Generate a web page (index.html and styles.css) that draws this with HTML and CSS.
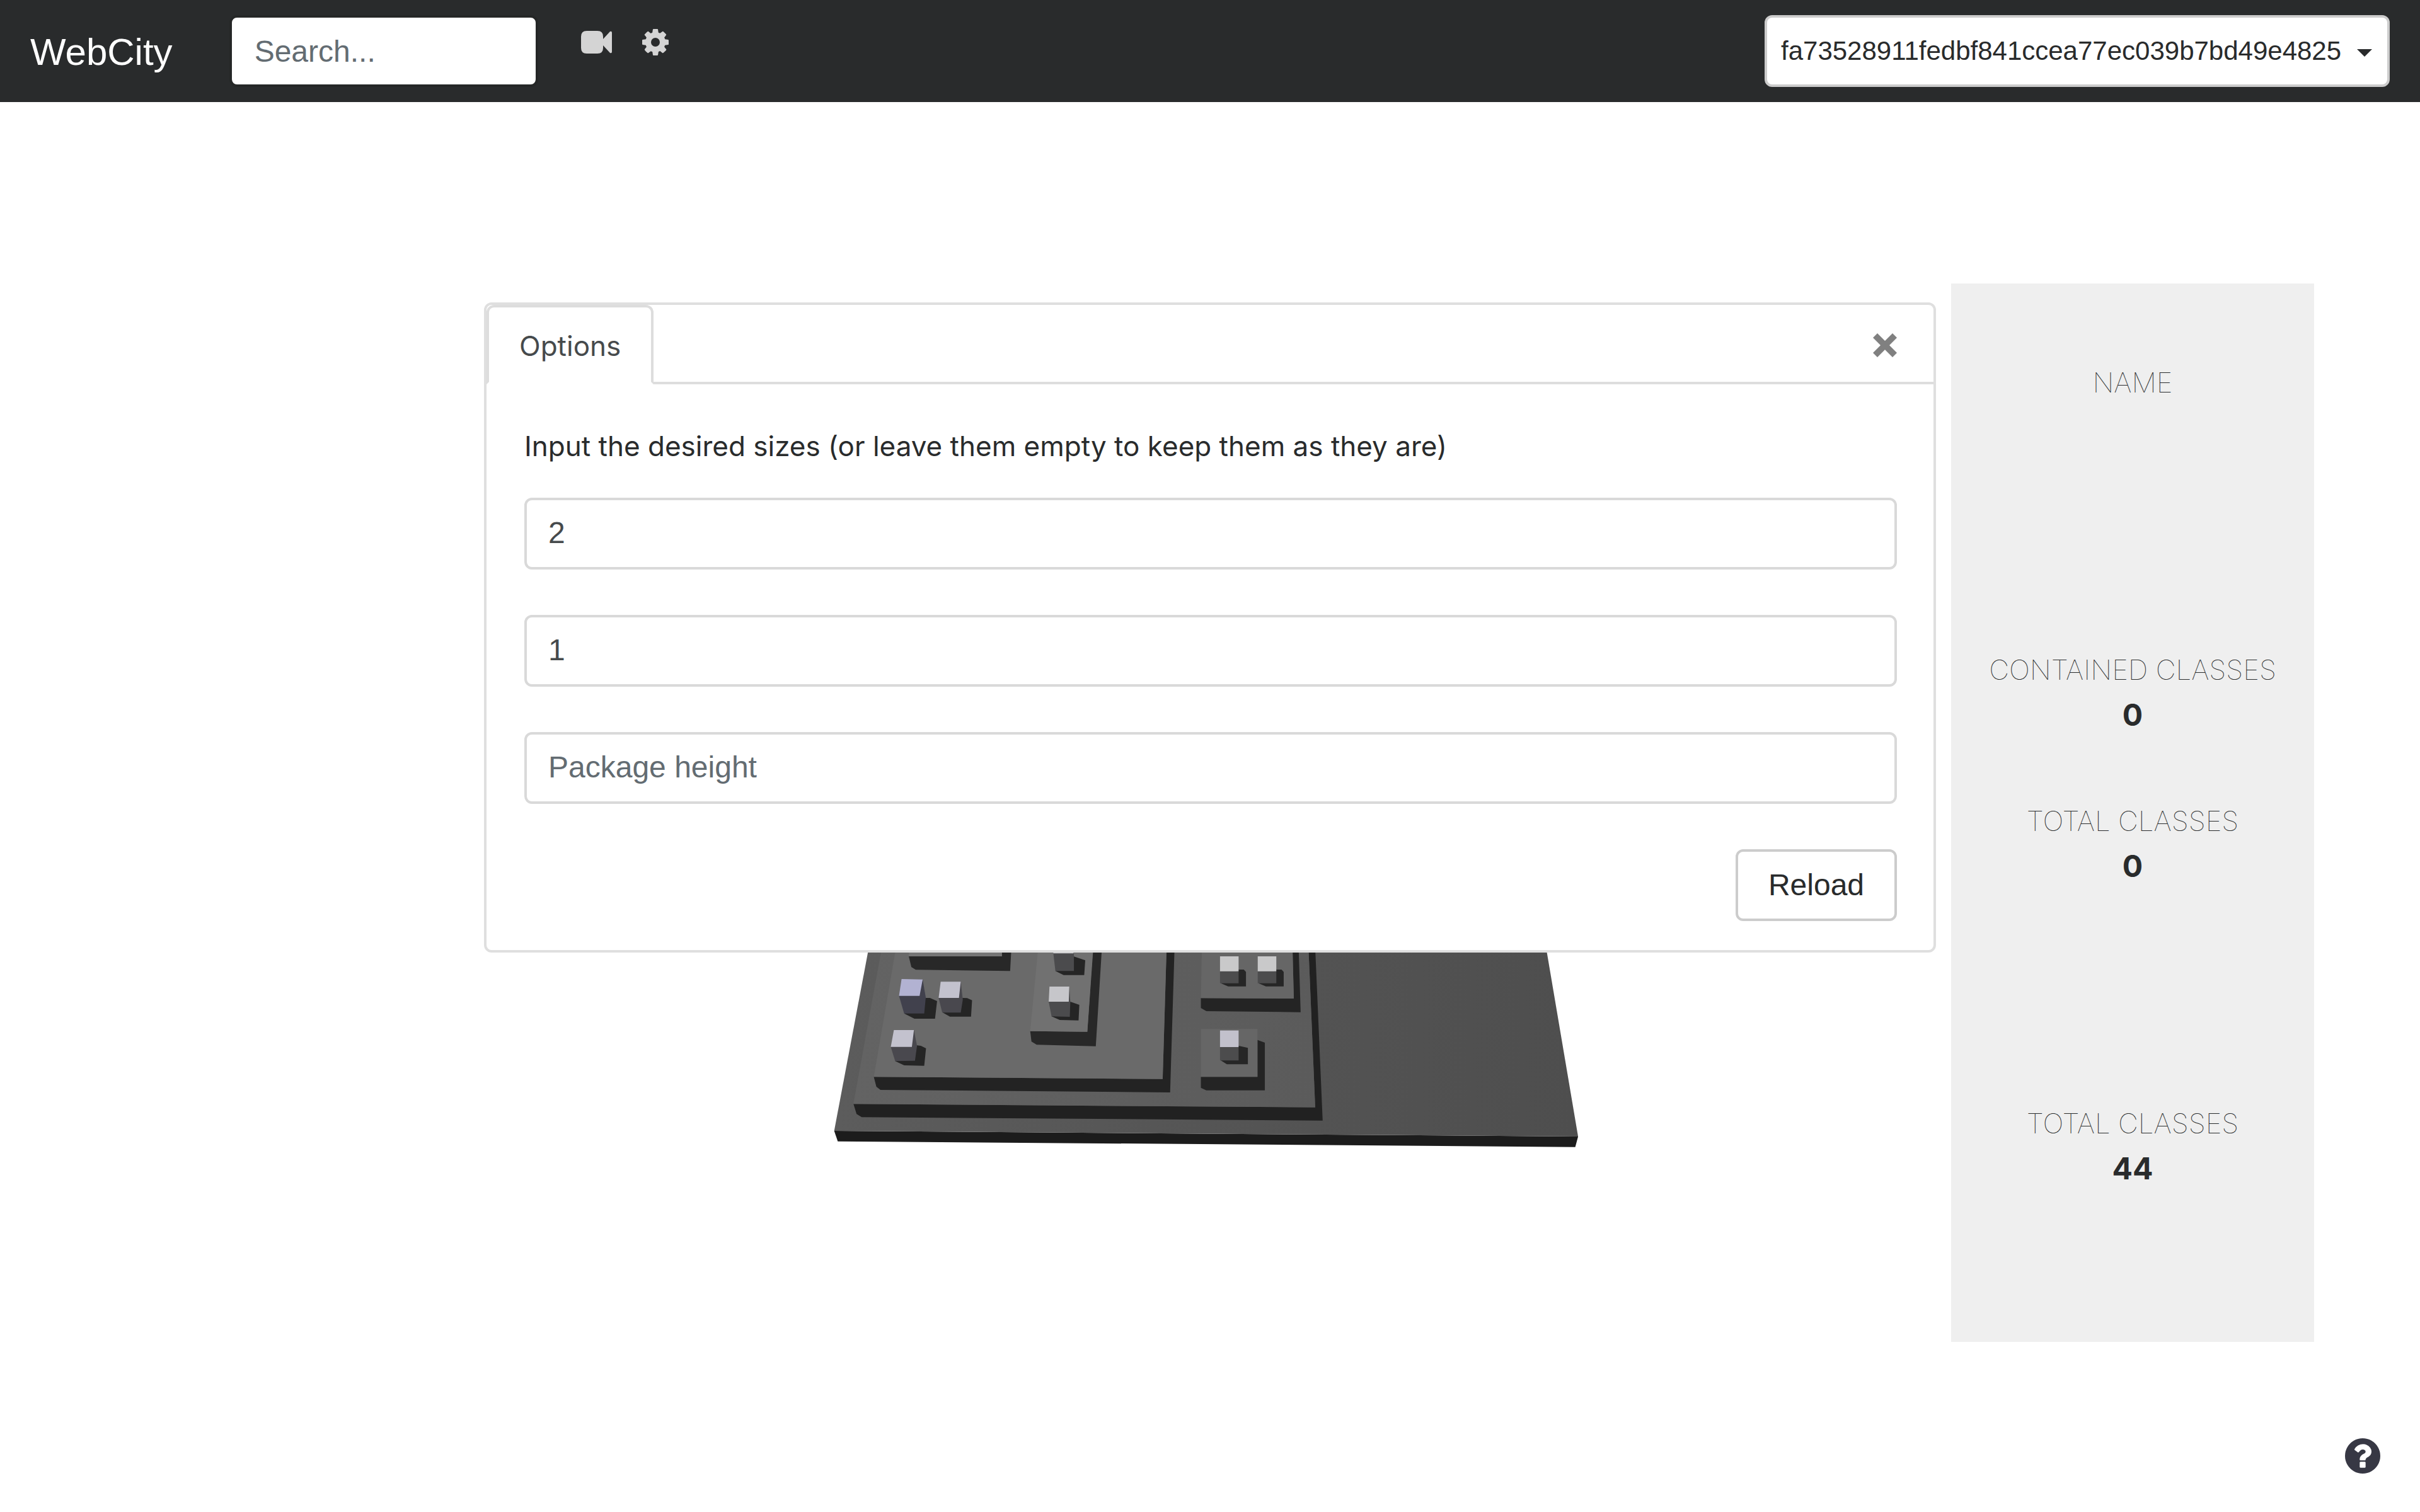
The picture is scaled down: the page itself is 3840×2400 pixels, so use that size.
FILE: index.html
```html
<!DOCTYPE html>
<html lang="en">
<head>
  <meta charset="utf-8">
  <meta name="viewport" content="width=device-width, initial-scale=1">
  <title>WebCity</title>
  <link rel="stylesheet" href="styles.css">
</head>
<body>
  <header class="navbar">
    <a class="brand" href="#">WebCity</a>
    <input class="control search" type="search" placeholder="Search..." aria-label="Search">
    <nav class="tools">
      <a class="tool" href="#" aria-label="Camera">
        <svg class="tool-icon camera" viewBox="0 0 49 36" aria-hidden="true">
          <path d="M9 0h17q9 0 9 9v4L46 1q3-1 3 2v30q0 3-3 2L35 23v4q0 9-9 9H9q-9 0-9-9V9q0-9 9-9z"/>
        </svg>
      </a>
      <a class="tool" href="#" aria-label="Settings">
        <svg class="tool-icon gear" viewBox="0 0 1536 1536" aria-hidden="true">
          <path d="M1024 768q0-106-75-181t-181-75-181 75-75 181 75 181 181 75 181-75 75-181zm512-109v222q0 12-8 23t-20 13l-185 28q-19 54-39 91 35 50 107 138 10 12 10 25t-9 23q-27 37-99 108t-94 71q-12 0-26-9l-138-108q-44 23-91 38-16 136-29 186-7 28-36 28H657q-14 0-24.500-8.500T621 1506l-28-184q-49-16-90-37l-141 107q-10 9-25 9-14 0-25-11-126-114-165-168-7-10-7-23 0-12 8-23 15-21 51-66.500t54-70.500q-27-50-41-99L29 913q-13-2-21-12.500T0 877V655q0-12 8-23t19-13l186-28q14-46 39-92-40-57-107-138-10-12-10-24 0-10 9-23 26-36 98.500-107.500T337 135q13 0 26 10l138 107q44-23 91-38 16-136 29-186 7-28 36-28h222q14 0 24.500 8.500T915 30l28 184q49 16 90 37l142-107q9-9 24-9 13 0 25 10 129 119 165 170 7 8 7 22 0 12-8 23-15 21-51 66.500t-54 70.500q26 50 41 98l183 28q13 2 21 12.500t8 23.500z"/>
        </svg>
      </a>
    </nav>
    <div class="commit">
      <select class="commit-select" aria-label="Commit">
        <option>fa73528911fedbf841ccea77ec039b7bd49e4825</option>
      </select>
    </div>
  </header>

  <main class="stage">
    <svg class="city" viewBox="0 162 3840 2238" role="img" aria-label="City of packages and classes">
      <defs>
        <linearGradient id="ground" x1="0" y1="0" x2="1" y2="0">
          <stop offset="0" stop-color="#5c5c5c"/><stop offset="1" stop-color="#4e4e4e"/>
        </linearGradient>
        <linearGradient id="block" x1="0" y1="0" x2="1" y2="0">
          <stop offset="0" stop-color="#636363"/><stop offset="1" stop-color="#5b5b5b"/>
        </linearGradient>
      </defs>
      <g transform="translate(1300 1490) scale(.408163 .333333)">
        <path fill="#1c1c1c" d="M58 915L2950 942 2939 992 72 965z"/>
        <path fill="url(#ground)" d="M210-70L58 915 2950 942 2810-70z"/>
        <path fill="#212121" d="M133 787L1928 803 1898-70H1924L1957 866 165 850 145 835z"/>
        <path fill="url(#block)" d="M260-70L133 787 1928 803 1898-70z"/>
        <path fill="#232323" d="M212 658L1335 668 1353-70H1384L1364 732 238 720 222 705z"/>
        <path fill="#6a6a6a" d="M314-70L212 658 1335 668 1353-70z"/>
        <path fill="#282828" d="M348 84H710V-70H752L742 154 375 148 358 135z"/>
        <path fill="#757575" d="M356-70L348 84H710V-70z"/>
        <path fill="#282828" d="M820 440L1042 443 1070-70 1104-60 1075 512 845 505 825 490z"/>
        <path fill="#717171" d="M860-70L820 440 1042 443 1072-70z"/>
        <path fill="#252525" d="M414 282H430L458 297 450 381H370L330 356zM558 282L575 283 594 293 590 371H508L480 352zM380 508L395 510 415 522 408 605 330 603 295 583zM976 300L1011 315 1008 389 935 387 903 370zM990 85L1034 103 1030 173H950L918 154z"/>
        <path fill="#41414d" d="M310 272L402 194 414 280 408 356H330z"/>
        <path fill="#b2b2d2" d="M320 192L402 194 390 272H310z"/>
        <path fill="#49484e" d="M464 282L550 205 558 290 550 352H478zM278 515L368 435 380 510 372 581 295 583z"/>
        <path fill="#c3c2ce" d="M472 205H550L543 282H464zM290 435H368L360 515H278z"/>
        <path fill="#4b4b4d" d="M892 300L972 228 976 300 974 372 903 370zM910 70H990V154H918z"/>
        <path fill="#c6c6ca" d="M895 228H972L970 300H892zM908 0H988V70H910z"/>
      </g>
      <g transform="translate(1860 1490) scale(.433673 .333333)">
        <path fill="#242424" d="M105 283L445 285 438-70H460L470 350 125 345 105 330zM312 482L339 495V722H125L105 710V658H312z"/>
        <path fill="#666" d="M110-70L105 283 445 285 438-70zM105 430H312V658H105z"/>
        <path fill="#262626" d="M243 147H262L270 158V227H205L178 212zM381 147H400L408 158V227H343L316 212zM243 510L277 520V598H200L178 580z"/>
        <path fill="#4c4c4d" d="M175 155H243V212H175zM313 155H381V212H313zM175 516H243V580H175z"/>
        <path fill="#c9c9ca" d="M175 84H243V155H175zM313 84H381V155H313z"/>
        <path fill="#c2c1cc" d="M175 437H243V516H175z"/>
      </g>
    </svg>

    <section class="card" role="dialog" aria-label="Options">
      <div class="card-head">
        <button class="tab" type="button">Options</button>
        <button class="close" type="button" aria-label="Close">
          <svg class="close-icon" viewBox="0 0 38 38" aria-hidden="true">
            <path d="M7 0L19 12 31 0 38 7 26 19 38 31 31 38 19 26 7 38 0 31 12 19 0 7z"/>
          </svg>
        </button>
      </div>
      <form class="card-body">
        <p class="hint">Input the desired sizes (or leave them empty to keep them as they are)</p>
        <input class="control" type="text" value="2" aria-label="Class width">
        <input class="control" type="text" value="1" aria-label="Class height">
        <input class="control" type="text" placeholder="Package height" aria-label="Package height">
        <button class="reload" type="button">Reload</button>
      </form>
    </section>

    <aside class="sidebar">
      <dl class="stats">
        <div class="stat name"><dt>NAME</dt></div>
        <div class="stat"><dt>CONTAINED CLASSES</dt><dd>0</dd></div>
        <div class="stat"><dt>TOTAL CLASSES</dt><dd>0</dd></div>
        <div class="stat overall"><dt>TOTAL CLASSES</dt><dd>44</dd></div>
      </dl>
    </aside>

    <a class="help" href="#" aria-label="Help">
      <svg class="help-icon" viewBox="0 0 1536 1536" aria-hidden="true">
        <path d="M896 1248v-192q0-14-9-23t-23-9H672q-14 0-23 9t-9 23v192q0 14 9 23t23 9h192q14 0 23-9t9-23zm256-672q0-88-55.500-163T958 297t-170-41q-243 0-371 213-15 24 8 42l132 100q7 6 19 6 16 0 25-12 53-68 86-92 34-24 86-24 48 0 85.500 26t37.500 59q0 38-20 61t-68 45q-63 28-115.500 86.500T640 892v36q0 14 9 23t23 9h192q14 0 23-9t9-23q0-19 21.500-49.500T972 829q32-18 49-28.500t46-35 44.500-48 28-60.500 12.500-81zm384 192q0 209-103 385.500T1153.500 1433 768 1536t-385.500-103T103 1153.500 0 768t103-385.500T382.500 103 768 0t385.500 103T1433 382.500 1536 768z"/>
      </svg>
    </a>
  </main>
</body>
</html>
```
FILE: styles.css
```css
* {
  box-sizing: border-box;
}

body {
  display: flex;
  flex-direction: column;
  min-height: 100vh;
  margin: 0;
  background: #fff;
  color: #292b2c;
  font: 48px/72px "Liberation Sans", Arial, sans-serif;
}

button,
input,
select {
  font: inherit;
  color: inherit;
}

.navbar {
  display: flex;
  align-items: flex-start;
  padding: 24px 48px;
  background: #292b2c;
}

.brand {
  padding: 14px 0 10px;
  margin-right: 90px;
  color: #fff;
  font-size: 60px;
  line-height: 90px;
  text-decoration: none;
}

.control {
  width: 100%;
  height: 114px;
  padding: 0 34px 4px;
  border: 4px solid #d9d9d9;
  border-radius: 12px;
  background: #fff;
  color: #464a4c;
  appearance: none;
}

.control::placeholder {
  color: #636c72;
  opacity: 1;
}

.search {
  width: 490px;
  padding: 0 36px;
  border-color: #252727;
}

.tools {
  display: flex;
  align-items: center;
  gap: 48px;
  height: 86px;
  margin-left: 68px;
}

.tool {
  display: flex;
}

.tool-icon {
  display: block;
  fill: #d4d4d4;
}

.camera {
  width: 49px;
  height: 36px;
}

.gear {
  width: 42px;
  height: 42px;
}

.commit {
  position: relative;
  margin-left: auto;
}

.commit::after {
  content: "";
  position: absolute;
  top: 54px;
  right: 28px;
  border: 12px solid transparent;
  border-top-color: #292b2c;
  border-bottom: 0;
  pointer-events: none;
}

.commit-select {
  width: 992px;
  height: 114px;
  padding: 0 22px;
  border: 4px solid #ccc;
  border-radius: 12px;
  background: #fff;
  font-size: 42px;
  appearance: none;
}

.stage {
  position: relative;
  flex: 1;
}

.city {
  display: block;
  width: 100%;
}

.card {
  position: absolute;
  top: 318px;
  left: 20%;
  width: 60%;
  border: 4px solid #dfdfdf;
  border-radius: 12px;
  background: #fff;
}

.card-head {
  display: flex;
  align-items: center;
  justify-content: space-between;
  height: 126px;
  padding-right: 58px;
  border-bottom: 4px solid #ddd;
}

.tab {
  height: 126px;
  padding: 4px 48px 0;
  margin-bottom: -4px;
  border: 4px solid #ddd;
  border-bottom-color: #fff;
  border-radius: 12px 12px 0 0;
  background: #fff;
  color: #464a4c;
  font-family: Inter, "Liberation Sans", sans-serif;
  font-size: 44px;
}

.close {
  padding: 6px 0 0;
  border: 0;
  background: none;
}

.close-icon {
  display: block;
  width: 38px;
  height: 38px;
  fill: #808080;
}

.card-body {
  display: flex;
  flex-direction: column;
  gap: 72px;
  padding: 62px 58px 46px 60px;
}

.hint {
  margin: 0 0 -26px;
  font-family: Inter, "Liberation Sans", sans-serif;
  font-size: 44px;
}

.reload {
  align-self: flex-end;
  width: 256px;
  height: 114px;
  padding: 0;
  border: 4px solid #ccc;
  border-radius: 12px;
  background: #fff;
}

.sidebar {
  position: absolute;
  top: 288px;
  right: 168px;
  width: 15%;
  height: 1680px;
  padding-top: 121px;
  background: #efefef;
  font-family: Inter, "Liberation Sans", sans-serif;
  text-align: center;
}

.stats {
  display: flex;
  flex-direction: column;
  gap: 96px;
  margin: 0;
}

.name {
  margin-bottom: 288px;
}

.overall {
  margin-top: 240px;
}

.stat dt {
  font-size: 44px;
  font-weight: 100;
}

.stat dd {
  margin: 0;
  font-weight: 700;
}

.help {
  position: absolute;
  right: 63px;
  bottom: 61px;
}

.help-icon {
  display: block;
  width: 56px;
  height: 56px;
  fill: #373844;
}
```
